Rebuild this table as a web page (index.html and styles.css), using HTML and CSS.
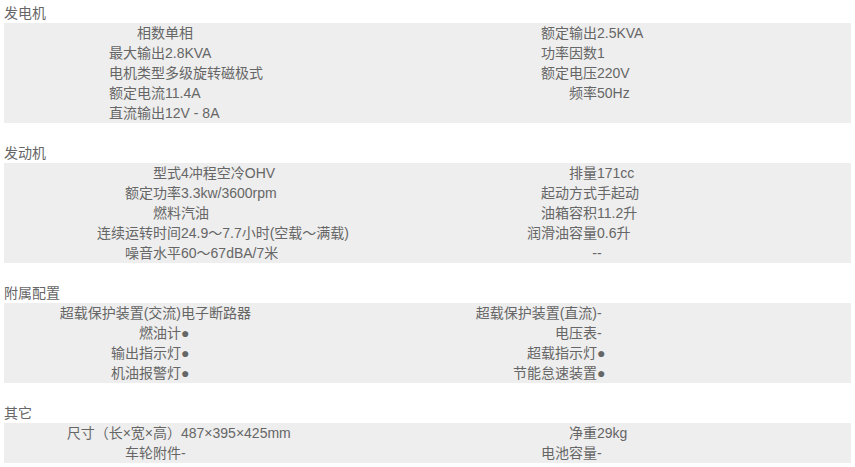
FILE: index.html
```html
<!DOCTYPE html>
<html lang="zh-CN">
<head>
<meta charset="utf-8">
<title>参数</title>
<link rel="stylesheet" href="styles.css">
</head>
<body>
<section class="spec">
  <h3 class="spec-title">发电机</h3>
  <div class="spec-grid narrow">
    <div class="k">相数</div><div class="v">单相</div><div class="k">额定输出</div><div class="v">2.5KVA</div>
    <div class="k">最大输出</div><div class="v">2.8KVA</div><div class="k">功率因数</div><div class="v">1</div>
    <div class="k">电机类型</div><div class="v">多级旋转磁极式</div><div class="k">额定电压</div><div class="v">220V</div>
    <div class="k">额定电流</div><div class="v">11.4A</div><div class="k">频率</div><div class="v">50Hz</div>
    <div class="k">直流输出</div><div class="v">12V - 8A</div><div class="k"></div><div class="v"></div>
  </div>
</section>
<section class="spec">
  <h3 class="spec-title">发动机</h3>
  <div class="spec-grid">
    <div class="k">型式</div><div class="v">4冲程空冷OHV</div><div class="k">排量</div><div class="v">171cc</div>
    <div class="k">额定功率</div><div class="v">3.3kw/3600rpm</div><div class="k">起动方式</div><div class="v">手起动</div>
    <div class="k">燃料</div><div class="v">汽油</div><div class="k">油箱容积</div><div class="v">11.2升</div>
    <div class="k">连续运转时间</div><div class="v">24.9～7.7小时(空载～满载)</div><div class="k">润滑油容量</div><div class="v">0.6升</div>
    <div class="k">噪音水平</div><div class="v">60～67dBA/7米</div><div class="k">-</div><div class="v">-</div>
  </div>
</section>
<section class="spec">
  <h3 class="spec-title">附属配置</h3>
  <div class="spec-grid">
    <div class="k">超载保护装置(交流)</div><div class="v">电子断路器</div><div class="k">超载保护装置(直流)</div><div class="v">-</div>
    <div class="k">燃油计</div><div class="v">●</div><div class="k">电压表</div><div class="v">-</div>
    <div class="k">输出指示灯</div><div class="v">●</div><div class="k">超载指示灯</div><div class="v">●</div>
    <div class="k">机油报警灯</div><div class="v">●</div><div class="k">节能怠速装置</div><div class="v">●</div>
  </div>
</section>
<section class="spec">
  <h3 class="spec-title">其它</h3>
  <div class="spec-grid">
    <div class="k">尺寸（长×宽×高）</div><div class="v">487×395×425mm</div><div class="k">净重</div><div class="v">29kg</div>
    <div class="k">车轮附件</div><div class="v">-</div><div class="k">电池容量</div><div class="v">-</div>
  </div>
</section>
</body>
</html>
```

FILE: styles.css
```css
html, body {
  background: #ffffff;
}
body {
  margin: 3px 4px;
  font-family: "Liberation Sans", "Noto Sans CJK SC", sans-serif;
  font-size: 14px;
  line-height: 20px;
  color: #666666;
}
.spec + .spec {
  margin-top: 20px;
}
.spec-title {
  margin: 0;
  font-size: 14px;
  font-weight: normal;
  line-height: 20px;
  color: #666666;
}
.spec-grid {
  display: grid;
  grid-template-columns: 177px 249px 167px 254px;
  grid-auto-rows: 20px;
  background: #eeeeee;
}
.spec-grid.narrow {
  grid-template-columns: 161px 265px 167px 254px;
}
.k {
  text-align: right;
  white-space: nowrap;
}
.v {
  text-align: left;
  white-space: nowrap;
}
```
